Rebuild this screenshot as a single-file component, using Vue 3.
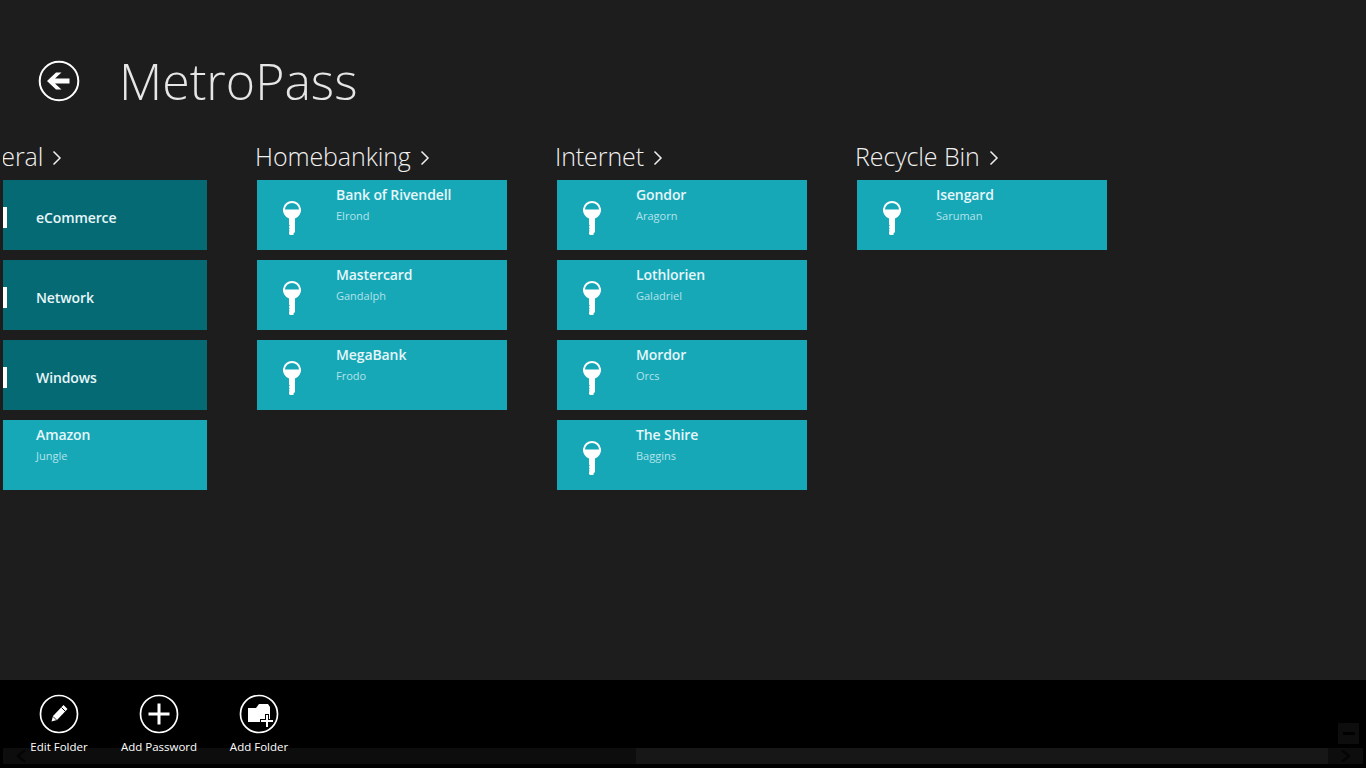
<script setup>
const groups = [
  { name: 'General', items: [
    { t: 'eCommerce', sel: true }, { t: 'Network', sel: true }, { t: 'Windows', sel: true }, { t: 'Amazon', s: 'Jungle' }
  ] },
  { name: 'Homebanking', items: [
    { t: 'Bank of Rivendell', s: 'Elrond' }, { t: 'Mastercard', s: 'Gandalph' }, { t: 'MegaBank', s: 'Frodo' }
  ] },
  { name: 'Internet', items: [
    { t: 'Gondor', s: 'Aragorn' }, { t: 'Lothlorien', s: 'Galadriel' }, { t: 'Mordor', s: 'Orcs' }, { t: 'The Shire', s: 'Baggins' }
  ] },
  { name: 'Recycle Bin', items: [ { t: 'Isengard', s: 'Saruman' } ] }
]
</script>

<template>
  <div class="page">
    <header class="head">
      <svg class="back" width="42" height="42" viewBox="0 0 42 42">
        <circle cx="21" cy="21" r="19.3" fill="none" stroke="#fff" stroke-width="2" />
        <path d="M9 21 L18 12.5 H23.5 L17 18.500 H31.500 V23.500 H17 L23.500 29.500 H18 Z" fill="#fff" />
      </svg>
      <h1 class="title">MetroPass</h1>
    </header>

    <main class="groups">
      <div class="track">
        <section v-for="g in groups" :key="g.name" class="group">
          <h2 class="gname">
            <span>{{ g.name }}</span>
            <svg width="10" height="16" viewBox="0 0 10 16"><path d="M1.500 1.500 L8 8 L1.500 14.500" fill="none" stroke="#eee" stroke-width="1.500" /></svg>
          </h2>
          <div class="tiles">
            <div v-for="i in g.items" :key="i.t" class="tile" :class="{ sel: i.sel }">
              <svg v-if="!i.sel" class="key" width="20" height="36" viewBox="0 0 20 36">
                <path fill-rule="evenodd" fill="#fff" d="M10 1a9 9 0 0 1 3 17.500V32l-1.500 1.500V35H8L7 34v-2.500l1-.5-1-.7v-1.600l1-.5-1-.7V26l1-.5-1-.7V18.500A9 9 0 0 1 10 1Z M10 3a7 7 0 0 0-7 6.500H17A7 7 0 0 0 10 3Z" />
              </svg>
              <span v-if="i.sel" class="mark"></span>
              <div class="txt">
                <div class="t">{{ i.t }}</div>
                <div v-if="i.s" class="s">{{ i.s }}</div>
              </div>
            </div>
          </div>
        </section>
      </div>
    </main>

    <footer class="bar">
      <button class="cmd">
        <svg width="40" height="40" viewBox="0 0 40 40">
          <circle cx="20" cy="20" r="18.500" fill="none" stroke="#fff" stroke-width="1.700" />
          <path fill="#fff" d="M12.500 27.500 L14 22 L24.500 11 L28.500 15 L18 26 Z" />
          <path fill="none" stroke="#000" stroke-width="1" d="M22.500 13.500 L26.500 17.500" />
          <path fill="none" stroke="#000" stroke-width=".8" d="M14 22.500 L17.500 26" />
        </svg>
        <span>Edit Folder</span>
      </button>
      <button class="cmd">
        <svg width="40" height="40" viewBox="0 0 40 40">
          <circle cx="20" cy="20" r="18.500" fill="none" stroke="#fff" stroke-width="1.700" />
          <path fill="#fff" d="M18.500 9.500h3v9h9v3h-9v9h-3v-9h-9v-3h9Z" />
        </svg>
        <span>Add Password</span>
      </button>
      <button class="cmd">
        <svg width="40" height="40" viewBox="0 0 40 40">
          <circle cx="20" cy="20" r="18.500" fill="none" stroke="#fff" stroke-width="1.700" />
          <path fill="#fff" d="M9 14h8l3-4h9l2 3v15H9Z" />
          <path fill="#fff" stroke="#000" stroke-width="2" paint-order="stroke" d="M27 21h2v5h5v2h-5v5h-2v-5h-5v-2h5Z" />
        </svg>
        <span>Add Folder</span>
      </button>
    </footer>

    <div class="scroll">
      <div class="arrow">
        <svg width="12" height="12" viewBox="0 0 12 12"><path d="M10 0 L3 6 L10 12" fill="none" stroke="#050505" stroke-width="2.500" /></svg>
      </div>
      <div class="trk"></div>
      <div class="thumb"></div>
      <div class="arrow">
        <svg width="12" height="12" viewBox="0 0 12 12"><path d="M2 0 L9 6 L2 12" fill="none" stroke="#050505" stroke-width="2.500" /></svg>
      </div>
    </div>
    <div class="mini"><span></span></div>
  </div>
</template>

<style>
html, body { margin: 0; background: #1d1d1d; }
</style>

<style scoped>
.page {
  position: relative;
  width: 1366px;
  height: 768px;
  overflow: hidden;
  background: #1d1d1d;
  color: #fff;
  font-family: "Open Sans", "Noto Sans", sans-serif;
  display: flex;
  flex-direction: column;
}
.head {
  display: flex;
  align-items: center;
  height: 140px;
  padding-left: 38px;
  box-sizing: border-box;
  flex: none;
}
.back { flex: none; margin-top: 22px; }
.title {
  margin: 22px 0 0 39px;
  font-family: "Open Sans", sans-serif;
  font-weight: 300;
  font-size: 50px;
  line-height: 1;
  color: #e6e6e6;
  letter-spacing: 0;
}
.groups {
  flex: 1;
  margin-left: 3px;
  min-height: 0;
  overflow: hidden;
}
.track {
  display: flex;
  gap: 50px;
  margin-left: -46px;
}
.group { width: 250px; flex: none; }
.gname {
  margin: 7px 0 15px -2px;
  height: 18px;
  display: flex;
  align-items: center;
  gap: 9px;
  font-weight: 300;
  font-size: 25px;
  line-height: 18px;
  color: #f0f0f0;
  white-space: nowrap;
  letter-spacing: -0.1px;
}
.gname svg { margin-top: 3px; }
.tiles { display: flex; flex-direction: column; gap: 10px; }
.tile {
  position: relative;
  width: 250px;
  height: 70px;
  background: #17a8b8;
  display: flex;
}
.tile.sel { background: #066a75; }
.key { position: absolute; left: 25px; top: 20px; }
.mark {
  position: absolute;
  left: 46px;
  top: 27px;
  width: 4px;
  height: 21px;
  background: #fff;
}
.txt { margin-left: 79px; padding-top: 5px; }
.sel .txt { padding-top: 28px; }
.t {
  font-size: 14px;
  font-weight: 600;
  line-height: 19px;
  color: #e6f6f8;
  white-space: nowrap;
  letter-spacing: -0.1px;
}
.s {
  margin-top: 4px;
  font-size: 11px;
  line-height: 16px;
  color: #b5e3e9;
}
.bar {
  flex: none;
  height: 88px;
  background: #000;
  display: flex;
  padding-left: 9px;
  box-sizing: border-box;
}
.cmd {
  width: 100px;
  padding: 14px 0 0;
  margin: 0;
  background: none;
  border: 0;
  color: #fff;
  display: flex;
  flex-direction: column;
  align-items: center;
  font-family: "Open Sans", sans-serif;
  font-size: 11.500px;
  line-height: 16px;
}
.cmd span { margin-top: 5px; white-space: nowrap; }
.scroll {
  position: absolute;
  left: 3px;
  top: 748px;
  width: 1360px;
  height: 16px;
  display: flex;
  pointer-events: none;
}
.trk { width: 598px; background: rgba(255, 255, 255, 0.05); }
.thumb { width: 692px; background: rgba(255, 255, 255, 0.09); }
.arrow {
  width: 35px;
  background: rgba(255, 255, 255, 0.05);
  display: flex;
  align-items: center;
  justify-content: center;
}
.mini {
  position: absolute;
  left: 1338px;
  top: 723px;
  width: 21px;
  height: 21px;
  background: #0d0d0d;
  display: flex;
  align-items: center;
  justify-content: center;
}
.mini span { width: 12px; height: 3px; background: #000; }
</style>
